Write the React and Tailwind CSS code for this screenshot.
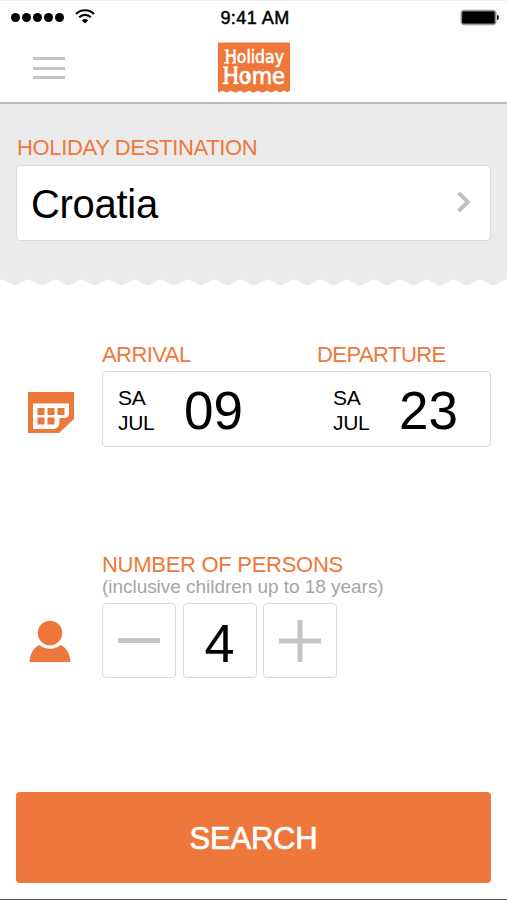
import React, { useState } from "react";

// ============================================
// CONSTANTS & CONFIG
// ============================================
const DATES = [
  { label: "ARRIVAL", weekday: "SA", month: "JUL", day: "09" },
  { label: "DEPARTURE", weekday: "SA", month: "JUL", day: "23" },
];

const TOOTH = 26.57;

// Torn paper edge: teeth point down, first tip at x = 15
const tornEdge = () => {
  let d = "M-40 0";
  for (let i = -1; i < 20; i++) {
    const tip = 15 + i * TOOTH;
    d += ` L${(tip - 1.5).toFixed(1)} 6.2 L${(tip + 1.5).toFixed(1)} 6.2`;
    d += ` L${(tip + TOOTH / 2 - 1).toFixed(1)} 0.4 L${(tip + TOOTH / 2 + 1).toFixed(1)} 0.4`;
  }
  return d + " V-1 H-40 Z";
};

const WifiIcon = () => (
  <svg width="20" height="15" viewBox="0 0 20 15" fill="none" stroke="#000">
    <path d="M1 5.1a12.6 12.6 0 0 1 18 0" strokeWidth="2.1" />
    <path d="M4.2 8.3a8.2 8.2 0 0 1 11.6 0" strokeWidth="2.1" />
    <path d="M10 14.6 6.9 11.4a4.4 4.4 0 0 1 6.2 0Z" fill="#000" stroke="none" />
  </svg>
);

const BatteryIcon = () => (
  <svg width="41" height="18" viewBox="0 0 41 18">
    <rect x="2" y="1.2" width="35" height="14.6" rx="3" fill="#888" stroke="#999" strokeWidth="1" />
    <rect x="3.2" y="2.4" width="32.4" height="12.2" rx="1.4" fill="#000" />
    <path d="M38 5.8c2.6.6 2.6 4.8 0 5.4Z" fill="#111" />
  </svg>
);

const Logo = () => (
  <svg width="72" height="51" viewBox="0 0 72 51" className="block overflow-visible">
    <path
      d="M0 .5H72V48.8L69 50.2 66 48.6 62 50.4 58 48.6 53.5 50.6 49 48.8 44.5 50.8 40 48.8 35.5 50.8 31 48.8 26.5 50.8 22 48.8 17.5 50.8 13 48.8 8.5 50.6 4.5 48.8 0 50.4Z"
      fill="#ee783b"
    />
    <g fill="#fff" stroke="#fff" fontFamily="'DejaVu Sans', sans-serif">
      <text x="7" y="21" fontSize="18" strokeWidth=".6" textLength="59" lengthAdjust="spacingAndGlyphs">
        Holiday
      </text>
      <text x="5" y="41.5" fontSize="23" strokeWidth=".7" textLength="62" lengthAdjust="spacingAndGlyphs">
        Home
      </text>
    </g>
    {/* serifs and curls of the lettering */}
    <g fill="none" stroke="#fff" strokeWidth="1.5">
      <path d="M6.5 8.3h4M15 8.3h3M6 20.8h5M14 20.8h4M4.5 41.2h6M15 41.2h6M5 25.2h5M15.5 25.2h4" />
      <path d="M30.5 36.2c-2.4 0-2.6-3.4.2-3.4" strokeWidth="1.8" />
    </g>
  </svg>
);

const CalendarIcon = () => (
  <svg width="46" height="42" viewBox="0 0 46 42">
    <path d="M0 0H46V27L31 41H0Z" fill="#ee783b" />
    <path d="M5 11.5H41V21.5C41 25 38.5 26 36 26H31.5V30C31.5 34 29 37 25.5 37H5Z" fill="#fff" />
    <path d="M9.5 16h7v7h-7zM19.5 16h7v7h-7zM29.5 16h7v7h-7zM9.5 25.5h7v7h-7zM19.5 25.5h7v7h-7z" fill="#ee783b" />
  </svg>
);

const PersonIcon = () => (
  <svg width="42" height="43" viewBox="0 0 42 43" fill="#ee783b">
    <circle cx="21" cy="13" r="12.3" />
    <path d="M10.5 25C16 30 26 30 31.5 25 37.5 27.5 40.8 33.5 41.6 42H.4C1.2 33.5 4.5 27.5 10.5 25Z" />
  </svg>
);

const Label = ({ children, className = "" }) => (
  <div className={`text-[22px] leading-[24px] text-[#ee783b] whitespace-nowrap ${className}`}>
    {children}
  </div>
);

const BOX = "bg-white border border-[#dadada] rounded";

export default function App() {
  const [persons, setPersons] = useState(4);

  return (
    <div className="w-[507px] h-[900px] flex flex-col overflow-hidden bg-white text-black border-b border-[#555] font-['Liberation_Sans',Arial,sans-serif]">
      {/* Status bar */}
      <div className="h-[34px] shrink-0 grid grid-cols-3 items-center pl-[11px] pr-[7px] border-t border-[#eee]">
        <div className="flex items-center">
          <div className="flex gap-[2px]">
            {[0, 1, 2, 3, 4].map((i) => (
              <span key={i} className="w-[9px] h-[9px] rounded-full bg-black" />
            ))}
          </div>
          <span className="ml-[11px] -mt-[2px]">
            <WifiIcon />
          </span>
        </div>
        <div className="text-center text-[18px] leading-[20px] tracking-[0.45px] pr-px [-webkit-text-stroke:0.5px_#000]">
          9:41 AM
        </div>
        <div className="flex justify-end">
          <BatteryIcon />
        </div>
      </div>

      {/* Header */}
      <header className="h-[70px] shrink-0 grid grid-cols-3 border-b-2 border-[#b9b9b9]">
        <button className="w-8 ml-[33px] mt-[23px] h-[22px] flex flex-col justify-between">
          <span className="block w-8 h-[3px] bg-[#c4c4c4]" />
          <span className="block w-8 h-[3px] bg-[#c4c4c4]" />
          <span className="block w-8 h-[3px] bg-[#c4c4c4]" />
        </button>
        <div className="flex justify-center pt-[8px]">
          <Logo />
        </div>
      </header>

      {/* Destination */}
      <section className="h-[175px] shrink-0 bg-[#ebebeb] px-4 pt-[32px]">
        <Label className="pl-px tracking-[-0.35px]">HOLIDAY DESTINATION</Label>
        <button className={`mt-[5px] w-full h-[76px] flex items-center justify-between pl-[14px] pr-[19px] ${BOX}`}>
          <span className="text-[40px] leading-[46px] tracking-[-0.3px] mt-[2px]">Croatia</span>
          <svg width="14" height="22" viewBox="0 0 14 22" fill="none" stroke="#bfbfbf" strokeWidth="3.8" className="-mt-[2px]">
            <path d="m1.5 2 9.5 9-9.5 9" />
          </svg>
        </button>
      </section>
      <svg width="507" height="7" viewBox="0 0 507 7" className="block shrink-0">
        <path d={tornEdge()} fill="#ebebeb" />
      </svg>

      {/* Dates */}
      <section className="flex pl-[28px] pr-4 pt-[57px] shrink-0">
        <div className="w-[74px] shrink-0 pt-[49px]">
          <CalendarIcon />
        </div>
        <div className="flex-1">
          <div className="grid grid-cols-[215px_1fr]">
            {DATES.map((d) => (
              <Label key={d.label} className="tracking-[-0.55px]">
                {d.label}
              </Label>
            ))}
          </div>
          <div className={`mt-[4px] h-[76px] grid grid-cols-[215px_1fr] ${BOX}`}>
            {DATES.map((d) => (
              <div key={d.label} className="flex items-center pl-[15px]">
                <div className="w-[66px] text-[21px] leading-[25px] tracking-[-0.3px] mt-[2px]">
                  <div>{d.weekday}</div>
                  <div>{d.month}</div>
                </div>
                <div className="text-[53px] leading-[60px] mt-[3px]">{d.day}</div>
              </div>
            ))}
          </div>
        </div>
      </section>

      {/* Persons */}
      <section className="flex pl-[29px] pt-[106px] shrink-0">
        <div className="w-[73px] shrink-0 pt-[67px]">
          <PersonIcon />
        </div>
        <div>
          <Label className="tracking-[-0.28px]">NUMBER OF PERSONS</Label>
          <div className="text-[19px] leading-[20px] tracking-[-0.04px] text-[#a5a5a5] whitespace-nowrap">
            (inclusive children up to 18 years)
          </div>
          <div className="mt-[6px] flex gap-[6.5px]">
            <button
              onClick={() => setPersons(Math.max(1, persons - 1))}
              className={`w-[74px] h-[75px] flex items-center justify-center ${BOX}`}
            >
              <span className="block w-[42px] h-[5px] bg-[#c4c4c4]" />
            </button>
            <div className={`w-[74px] h-[75px] flex items-center justify-center text-[54px] leading-[60px] pt-[4px] ${BOX}`}>
              {persons}
            </div>
            <button
              onClick={() => setPersons(persons + 1)}
              className={`w-[74px] h-[75px] flex items-center justify-center ${BOX}`}
            >
              <svg width="42" height="42" viewBox="0 0 42 42" stroke="#c4c4c4" strokeWidth="5">
                <path d="M0 21h42M21 0v42" />
              </svg>
            </button>
          </div>
        </div>
      </section>

      {/* Search */}
      <div className="mt-auto px-4 pb-[16px] shrink-0">
        <button className="w-full h-[91px] rounded bg-[#ee783b] text-white text-[31px] leading-[36px] pt-[2px] tracking-[-0.2px] [-webkit-text-stroke:0.7px_#fff]">
          SEARCH
        </button>
      </div>
    </div>
  );
}
